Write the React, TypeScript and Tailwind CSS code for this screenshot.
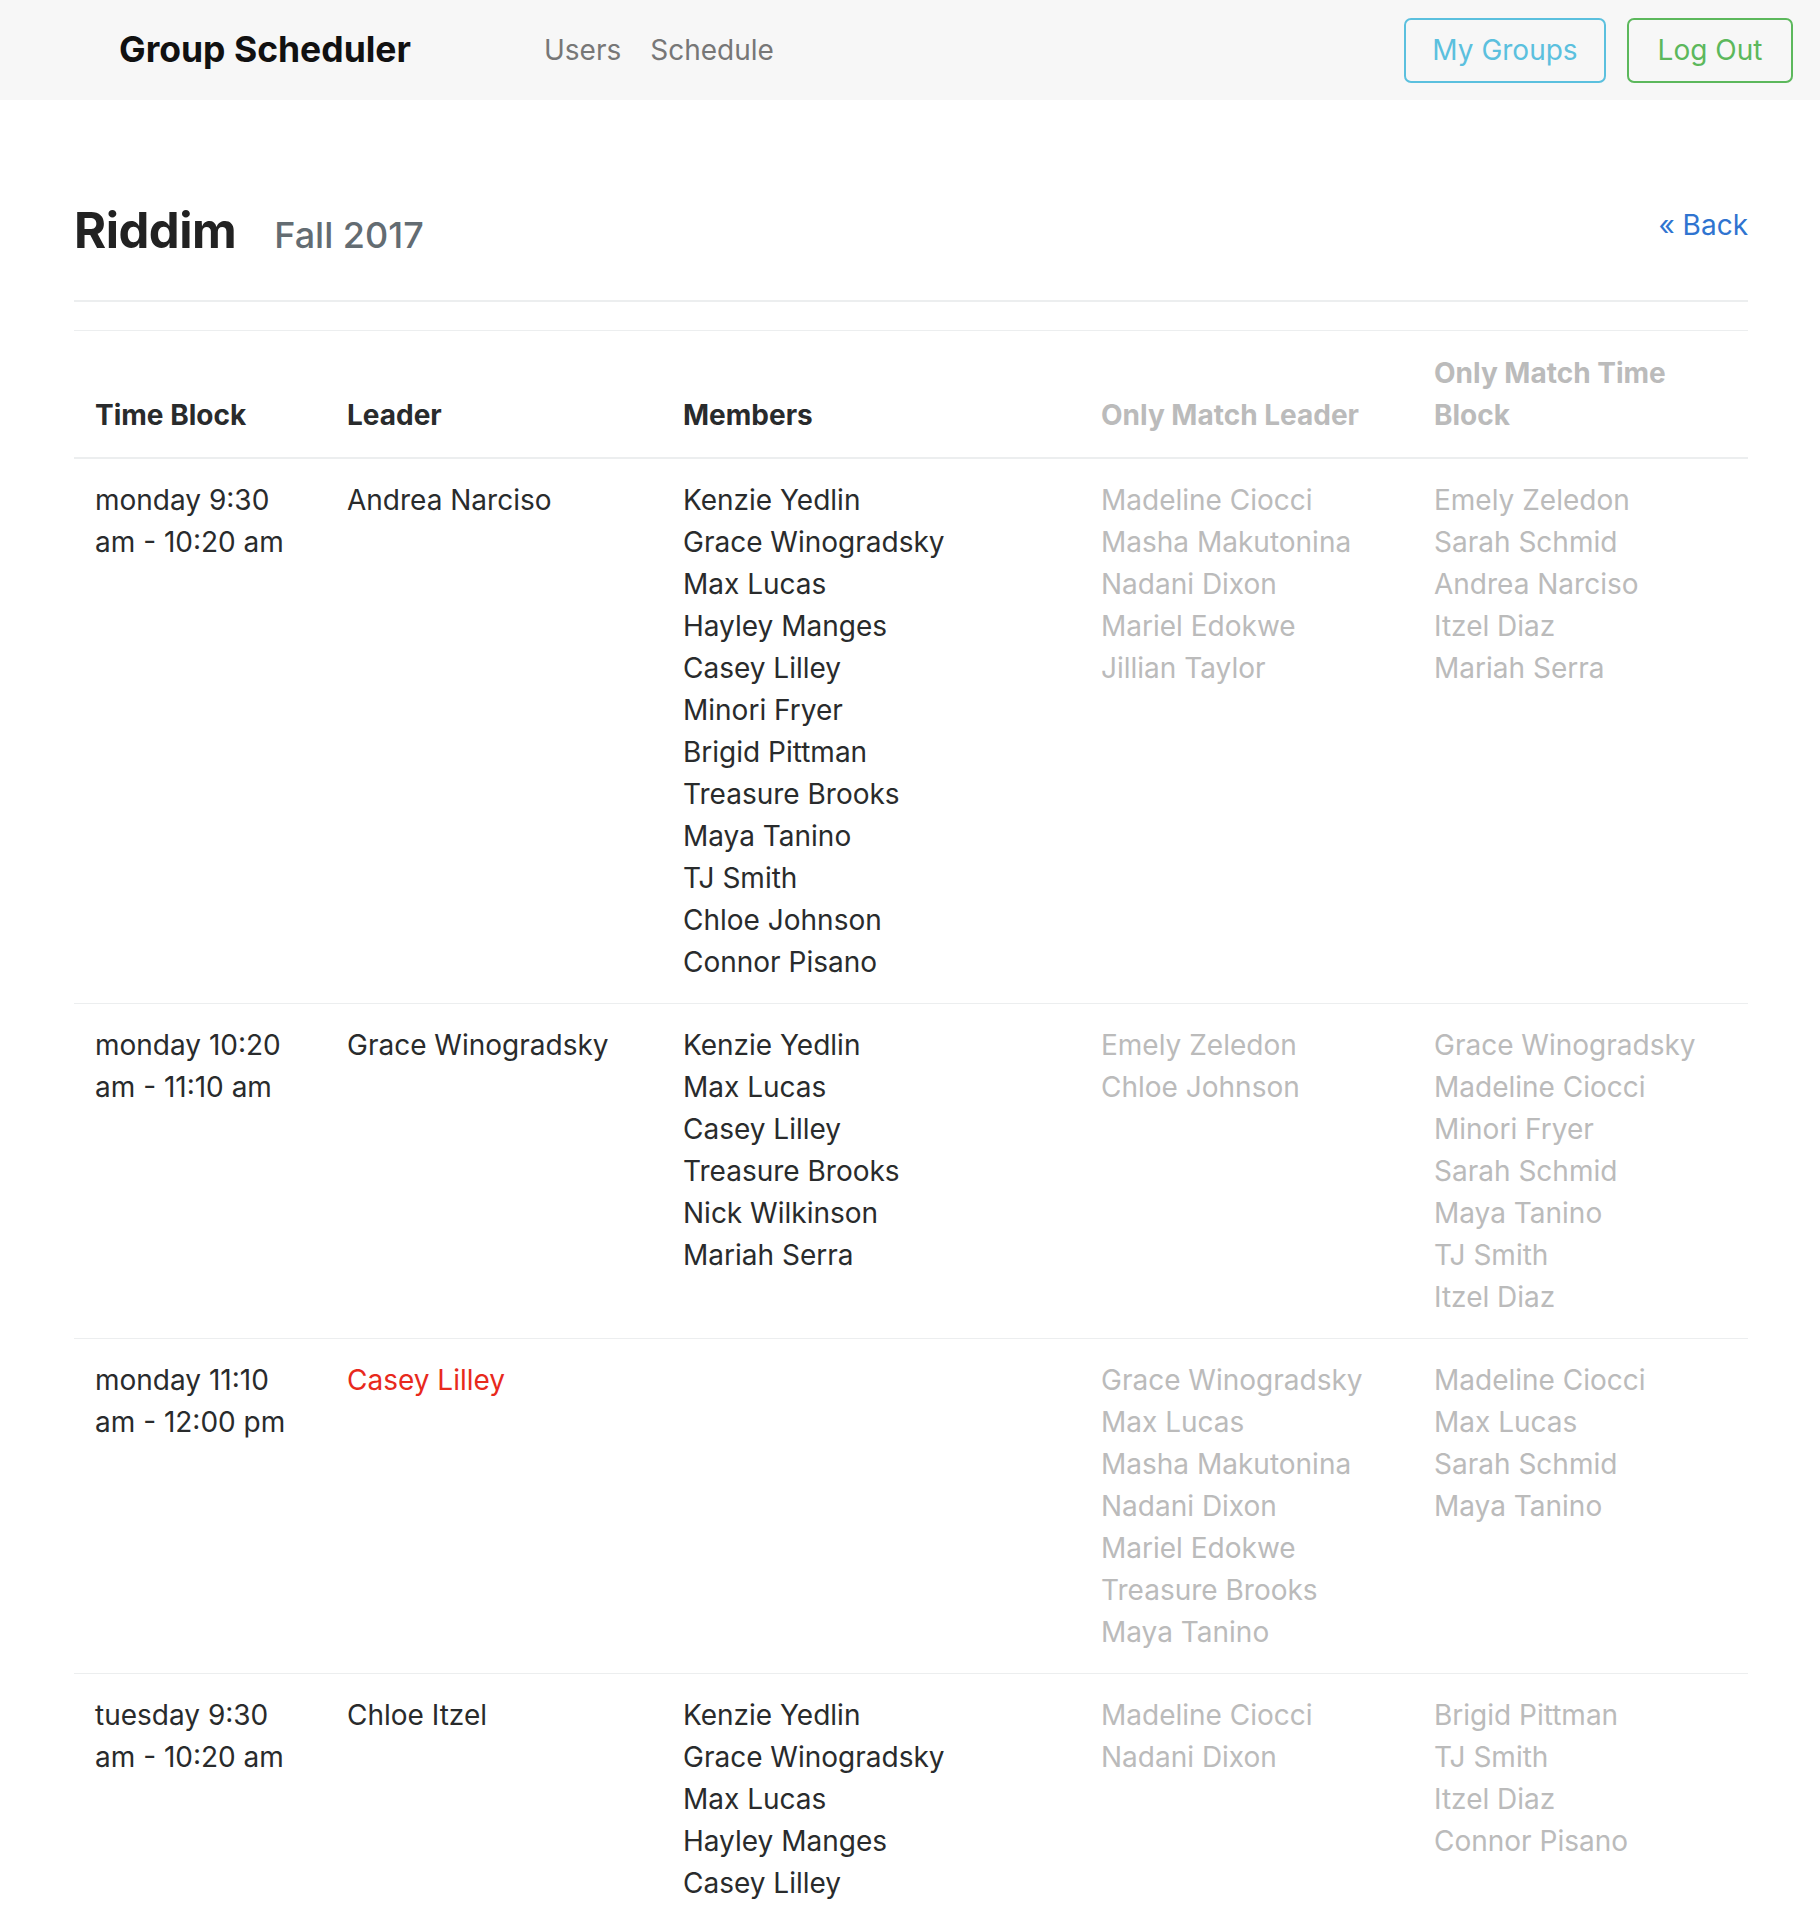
import React from "react";

type Row = {
  time: [string, string];
  leader: string;
  leaderMissing?: boolean;
  members: string[];
  matchLeader: string[];
  matchTime: string[];
};

const rows: Row[] = [
  {
    time: ["monday 9:30", "am - 10:20 am"],
    leader: "Andrea Narciso",
    members: [
      "Kenzie Yedlin",
      "Grace Winogradsky",
      "Max Lucas",
      "Hayley Manges",
      "Casey Lilley",
      "Minori Fryer",
      "Brigid Pittman",
      "Treasure Brooks",
      "Maya Tanino",
      "TJ Smith",
      "Chloe Johnson",
      "Connor Pisano",
    ],
    matchLeader: ["Madeline Ciocci", "Masha Makutonina", "Nadani Dixon", "Mariel Edokwe", "Jillian Taylor"],
    matchTime: ["Emely Zeledon", "Sarah Schmid", "Andrea Narciso", "Itzel Diaz", "Mariah Serra"],
  },
  {
    time: ["monday 10:20", "am - 11:10 am"],
    leader: "Grace Winogradsky",
    members: ["Kenzie Yedlin", "Max Lucas", "Casey Lilley", "Treasure Brooks", "Nick Wilkinson", "Mariah Serra"],
    matchLeader: ["Emely Zeledon", "Chloe Johnson"],
    matchTime: [
      "Grace Winogradsky",
      "Madeline Ciocci",
      "Minori Fryer",
      "Sarah Schmid",
      "Maya Tanino",
      "TJ Smith",
      "Itzel Diaz",
    ],
  },
  {
    time: ["monday 11:10", "am - 12:00 pm"],
    leader: "Casey Lilley",
    leaderMissing: true,
    members: [],
    matchLeader: [
      "Grace Winogradsky",
      "Max Lucas",
      "Masha Makutonina",
      "Nadani Dixon",
      "Mariel Edokwe",
      "Treasure Brooks",
      "Maya Tanino",
    ],
    matchTime: ["Madeline Ciocci", "Max Lucas", "Sarah Schmid", "Maya Tanino"],
  },
  {
    time: ["tuesday 9:30", "am - 10:20 am"],
    leader: "Chloe Itzel",
    members: ["Kenzie Yedlin", "Grace Winogradsky", "Max Lucas", "Hayley Manges", "Casey Lilley"],
    matchLeader: ["Madeline Ciocci", "Nadani Dixon"],
    matchTime: ["Brigid Pittman", "TJ Smith", "Itzel Diaz", "Connor Pisano"],
  },
];

function NameList({ names, muted }: { names: string[]; muted?: boolean }) {
  return (
    <div className={muted ? "text-[#bbbbbb]" : ""}>
      {names.map((n, i) => (
        <div key={i}>{n}</div>
      ))}
    </div>
  );
}

export default function App() {
  return (
    <div className="h-[1908px] overflow-hidden bg-white font-['Inter',sans-serif] text-[28px] leading-[42px] text-[#292b2c]">
      <nav className="h-[100px] bg-[#f7f7f7] flex items-center pl-[119px] pr-[27px]">
        <span className="text-[35.5px] font-bold text-[#111]">Group Scheduler</span>
        <div className="flex gap-[29px] ml-[133px] text-[#777]">
          <span>Users</span>
          <span>Schedule</span>
        </div>
        <div className="ml-auto flex gap-[21px]">
          <button className="w-[202px] h-[65px] border-2 border-[#5bc0de] rounded-[7px] text-[#5bc0de]">My Groups</button>
          <button className="w-[166px] h-[65px] border-2 border-[#5cb85c] rounded-[7px] text-[#5cb85c]">Log Out</button>
        </div>
      </nav>

      <main className="pl-[74px] pr-[72px]">
        <div className="mt-[104px] flex justify-between items-start">
          <div className="flex items-baseline gap-[38px]">
            <h1 className="text-[49px] leading-[54px] font-bold text-[#222] tracking-[-0.5px]">Riddim</h1>
            <span className="text-[36px] font-medium text-[#636c72]">Fall 2017</span>
          </div>
          <a className="text-[#2f74d0] leading-[42px]">« Back</a>
        </div>

        <hr className="mt-[42px] mb-[28px] border-t-2 border-[#eceeef]" />

        <table className="w-full table-fixed border-collapse">
          <colgroup>
            <col className="w-[252px]" />
            <col className="w-[336px]" />
            <col className="w-[418px]" />
            <col className="w-[333px]" />
            <col className="w-[335px]" />
          </colgroup>
          <thead>
            <tr className="font-bold text-left">
              <th className="p-[21px] align-bottom border-t border-b-2 border-[#eceeef] text-left">Time Block</th>
              <th className="p-[21px] align-bottom border-t border-b-2 border-[#eceeef] text-left">Leader</th>
              <th className="p-[21px] align-bottom border-t border-b-2 border-[#eceeef] text-left">Members</th>
              <th className="p-[21px] align-bottom border-t border-b-2 border-[#eceeef] text-left text-[#bbbbbb]">
                Only Match Leader
              </th>
              <th className="p-[21px] align-bottom border-t border-b-2 border-[#eceeef] text-left text-[#bbbbbb]">
                Only Match Time Block
              </th>
            </tr>
          </thead>
          <tbody>
            {rows.map((r, i) => (
              <tr key={i}>
                <td className="px-[21px] py-[20px] align-top border-t border-[#eceeef]">
                  <div>{r.time[0]}</div>
                  <div>{r.time[1]}</div>
                </td>
                <td
                  className={`px-[21px] py-[20px] align-top border-t border-[#eceeef] ${
                    r.leaderMissing ? "text-[#e8291c]" : ""
                  }`}
                >
                  {r.leader}
                </td>
                <td className="px-[21px] py-[20px] align-top border-t border-[#eceeef]">
                  <NameList names={r.members} />
                </td>
                <td className="px-[21px] py-[20px] align-top border-t border-[#eceeef]">
                  <NameList names={r.matchLeader} muted />
                </td>
                <td className="px-[21px] py-[20px] align-top border-t border-[#eceeef]">
                  <NameList names={r.matchTime} muted />
                </td>
              </tr>
            ))}
          </tbody>
        </table>
      </main>
    </div>
  );
}
